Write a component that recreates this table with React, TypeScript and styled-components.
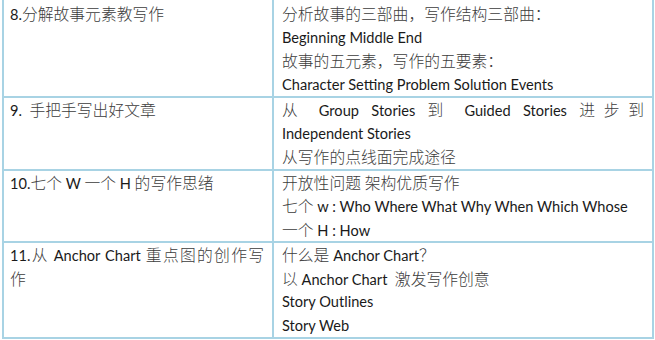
import React from "react";
import styled, { createGlobalStyle } from "styled-components";

const GlobalStyle = createGlobalStyle`
  html, body {
    margin: 0;
    padding: 0;
    background: #ffffff;
  }
`;

const Page = styled.div`
  width: 655px;
  height: 340px;
  overflow: hidden;
  background: #ffffff;
`;

const Table = styled.div`
  display: grid;
  grid-template-columns: 268px 378px;
  gap: 2px;
  width: 652px;
  margin-left: 2px;
  padding: 0 2px 2px;
  box-sizing: border-box;
  background: #a8d3e4;
`;

const Cell = styled.div<{ $wide?: boolean }>`
  background: #ffffff;
  padding: 0 8px 0 ${(p) => (p.$wide ? "8px" : "6px")};
  font-family: Lato, "Noto Sans CJK SC", sans-serif;
  font-size: 14.6px;
  color: #1a1a1a;

  &:nth-child(-n + 2) {
    padding-top: 2px;
  }
`;

const Line = styled.div<{ $justify?: boolean }>`
  line-height: 23.5px;
  height: 23.5px;
  text-align: ${(p) => (p.$justify ? "justify" : "left")};
  text-align-last: ${(p) => (p.$justify ? "justify" : "auto")};
  white-space: ${(p) => (p.$justify ? "normal" : "pre")};
`;

const Zh = styled.span`
  font-family: "Noto Sans CJK SC", sans-serif;
  font-size: 15.8px;
  font-weight: 300;
  color: #3c3c3c;
`;

type LineData = string | { t: string; justify: boolean };

const rows: { title: LineData[]; body: LineData[] }[] = [
  {
    title: ["8.分解故事元素教写作"],
    body: [
      "分析故事的三部曲，写作结构三部曲：",
      "Beginning Middle End",
      "故事的五元素，写作的五要素：",
      "Character Setting Problem Solution Events",
    ],
  },
  {
    title: ["9.  手把手写出好文章"],
    body: [
      { t: "从 Group Stories 到 Guided Stories 进步到", justify: true },
      "Independent Stories",
      "从写作的点线面完成途径",
    ],
  },
  {
    title: ["10.七个 W 一个 H 的写作思绪"],
    body: [
      "开放性问题 架构优质写作",
      "七个 w : Who Where What Why When Which Whose",
      "一个 H : How",
    ],
  },
  {
    title: [{ t: "11.从 Anchor Chart 重点图的创作写", justify: true }, "作"],
    body: [
      "什么是 Anchor Chart？",
      "以 Anchor Chart  激发写作创意",
      "Story Outlines",
      "Story Web",
    ],
  },
];

// wrap runs of Chinese characters so they get their own font
const Text: React.FC<{ value: string }> = ({ value }) => {
  const parts = value.split(/([\u3000-\u9fff\uff00-\uffef]+)/);
  return (
    <>
      {parts.map((part, i) =>
        /[\u3000-\u9fff\uff00-\uffef]/.test(part) ? (
          <Zh key={i}>{part}</Zh>
        ) : (
          <React.Fragment key={i}>{part}</React.Fragment>
        )
      )}
    </>
  );
};

const renderLine = (line: LineData, i: number) => {
  const text = typeof line === "string" ? line : line.t;
  const justify = typeof line === "string" ? false : line.justify;
  return (
    <Line key={i} $justify={justify}>
      <Text value={text} />
    </Line>
  );
};

const App: React.FC = () => {
  return (
    <Page>
      <GlobalStyle />
      <Table>
        {rows.map((row, i) => (
          <React.Fragment key={i}>
            <Cell>{row.title.map(renderLine)}</Cell>
            <Cell $wide>{row.body.map(renderLine)}</Cell>
          </React.Fragment>
        ))}
      </Table>
    </Page>
  );
};

export default App;
